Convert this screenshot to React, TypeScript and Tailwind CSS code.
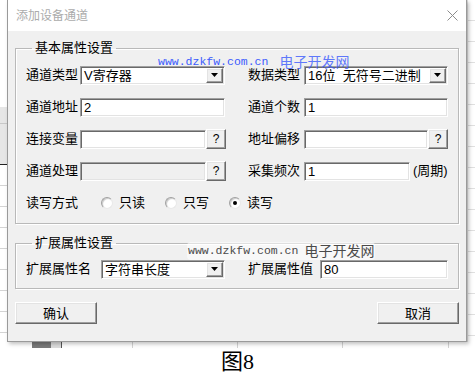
import React from "react";

const cjk = "font-['Liberation_Sans','Noto_Sans_CJK_SC',sans-serif]";
const sunken =
  "border border-t-[#a0a0a0] border-l-[#a0a0a0] border-b-white border-r-white shadow-[inset_1px_1px_0_#696969,inset_-1px_-1px_0_#e3e3e3]";
const raised =
  "bg-[#f0f0f0] border border-t-white border-l-white border-b-[#696969] border-r-[#696969] shadow-[inset_-1px_-1px_0_#a0a0a0,inset_1px_1px_0_#e3e3e3]";

const Input = ({ w, value, disabled }: { w: string; value?: string; disabled?: boolean }) => (
  <div className={`${sunken} ${w} h-[19px] ${disabled ? "bg-[#f0f0f0]" : "bg-white"} flex items-center pl-[3px] text-[13px] leading-none`}>
    {value}
  </div>
);

const Select = ({ w, value }: { w: string; value: string }) => (
  <div className={`${sunken} ${w} h-[19px] bg-white flex items-center justify-between pl-[3px] pr-[1px] text-[13px] leading-none`}>
    <span className="whitespace-pre">{value}</span>
    <div className={`${raised} w-[17px] h-[15px] flex items-center justify-center`}>
      <svg width="7" height="4" viewBox="0 0 7 4">
        <path d="M0 0h7L3.5 4z" fill="#000" />
      </svg>
    </div>
  </div>
);

const Ask = () => (
  <div className={`${raised} w-[20px] h-[20px] flex items-center justify-center text-[12px] leading-none`}>?</div>
);

const Radio = ({ label, checked }: { label: string; checked?: boolean }) => (
  <div className="flex items-center gap-[6px]">
    <div className="w-[12px] h-[12px] rounded-full bg-white border border-t-[#a0a0a0] border-l-[#a0a0a0] border-b-[#e8e8e8] border-r-[#e8e8e8] shadow-[inset_1px_1px_1px_#c8c8c8] flex items-center justify-center">
      {checked && <div className="w-[4px] h-[4px] rounded-full bg-black" />}
    </div>
    <span>{label}</span>
  </div>
);

const groupBox =
  "border border-[#b9b9b9] shadow-[inset_1px_1px_0_#ffffff,1px_1px_0_#ffffff] pl-[10px] pr-[9px]";

export default function App() {
  return (
    <div className={`w-[475px] h-[380px] bg-white flex flex-col overflow-hidden ${cjk}`}>
      <div className="h-[348px] flex flex-col">
        <div className="flex h-[342px]">
          {/* spreadsheet behind, left */}
          <div className="w-[7px] flex flex-col">
            <div className="h-[107px] bg-white" />
            <div className="h-[17px] bg-[#e6e6e6] border-b border-[#c8c8c8]" />
            <div className="h-[41px] bg-[#e6e6e6] border-b border-[#222]" />
            <div className="flex-1 bg-[repeating-linear-gradient(to_bottom,#ffffff_0,#ffffff_20px,#d4d4d4_20px,#d4d4d4_21px)]" />
          </div>

          <div className="relative z-10 w-[460px] h-[342px] flex flex-col border-l border-r border-b border-[#9a9a9a] shadow-[2px_2px_4px_rgba(0,0,0,0.25)]">
            <div className="h-[31px] bg-white flex items-center justify-between pl-[8px] pr-[8px]">
              <span className="text-[12px] text-[#ababab]">添加设备通道</span>
              <svg width="11" height="11" viewBox="0 0 11 11">
                <path d="M0.5 0.5L10.5 10.5M10.5 0.5L0.5 10.5" stroke="#8c8c8c" strokeWidth="1" />
              </svg>
            </div>

            <div className="flex-1 bg-[#f0f0f0] px-[7px] pt-[9px] flex flex-col text-[13px] text-black">
              <fieldset className={`${groupBox} pt-[9px] pb-[10px]`}>
                <legend className="ml-[6px] px-[3px] leading-[16px]">基本属性设置</legend>
                <div className="flex flex-col gap-[12px]">
                  <div className="flex items-center h-[20px]">
                    <span className="w-[54px]">通道类型</span>
                    <Select w="w-[145px]" value="V寄存器" />
                    <span className="ml-[23px] w-[56px]">数据类型</span>
                    <Select w="w-[144px]" value="16位  无符号二进制" />
                  </div>
                  <div className="flex items-center h-[20px]">
                    <span className="w-[54px]">通道地址</span>
                    <Input w="w-[145px]" value="2" />
                    <span className="ml-[23px] w-[56px]">通道个数</span>
                    <Input w="w-[144px]" value="1" />
                  </div>
                  <div className="flex items-center h-[20px]">
                    <span className="w-[54px]">连接变量</span>
                    <Input w="w-[126px]" />
                    <Ask />
                    <span className="ml-[22px] w-[56px]">地址偏移</span>
                    <Input w="w-[124px]" />
                    <Ask />
                  </div>
                  <div className="flex items-center h-[20px]">
                    <span className="w-[54px]">通道处理</span>
                    <Input w="w-[126px]" disabled />
                    <Ask />
                    <span className="ml-[22px] w-[56px]">采集频次</span>
                    <Input w="w-[106px]" value="1" />
                    <span className="ml-[3px]">(周期)</span>
                  </div>
                  <div className="flex items-center h-[20px]">
                    <span className="w-[75px]">读写方式</span>
                    <div className="flex items-center gap-[20px]">
                      <Radio label="只读" />
                      <Radio label="只写" />
                      <Radio label="读写" checked />
                    </div>
                  </div>
                </div>
              </fieldset>

              <fieldset className={`${groupBox} mt-[11px] pt-[8px] pb-[9px]`}>
                <legend className="ml-[6px] px-[3px] leading-[16px]">扩展属性设置</legend>
                <div className="flex items-center h-[20px]">
                  <span className="w-[75px]">扩展属性名</span>
                  <Select w="w-[124px]" value="字符串长度" />
                  <span className="ml-[23px] w-[72px]">扩展属性值</span>
                  <Input w="w-[128px]" value="80" />
                </div>
              </fieldset>

              <div className="mt-[13px] flex justify-between">
                <button className={`${raised} w-[82px] h-[22px] text-[13px] leading-none`}>确认</button>
                <button className={`${raised} w-[82px] h-[22px] text-[13px] leading-none`}>取消</button>
              </div>
            </div>

            {/* watermarks */}
            <div className="absolute left-[150px] top-[53px] h-[18px] flex items-center gap-[11px] text-[#3b5bfd] pointer-events-none">
              <span className="font-['Liberation_Mono',monospace] text-[11.5px]">www.dzkfw.com.cn</span>
              <span className="text-[14px] opacity-80">电子开发网</span>
            </div>
            <div className="absolute left-[179px] top-[242px] h-[18px] flex items-center gap-[6px] text-[#4a4a4a] pointer-events-none bg-[rgba(255,255,255,0.55)] rounded-[4px] px-[1px]">
              <span className="font-['Liberation_Mono',monospace] text-[11.5px]">www.dzkfw.com.cn</span>
              <span className="text-[14px]">电子开发网</span>
            </div>
          </div>

          {/* spreadsheet behind, right */}
          <div className="flex-1 bg-[repeating-linear-gradient(to_bottom,#ffffff_0,#ffffff_20px,#e0e0e0_20px,#e0e0e0_21px)] border-l border-[#e0e0e0]" />
        </div>

        <div className="flex-1 flex bg-white">
          <div className="w-[32px]" />
          <div className="w-[19px] bg-[#7a7a7a]" />
          <div className="w-[11px] bg-[#dcdcdc] border-r border-[#555]" />
          <div className="w-[71px] border-r border-[#d4d4d4]" />
          <div className="w-[105px] border-r border-[#d4d4d4]" />
          <div className="w-[105px] border-r border-[#d4d4d4]" />
          <div className="w-[106px] border-r border-[#d4d4d4]" />
        </div>
      </div>

      <div className="flex-1 flex justify-center">
        <span className="font-['Liberation_Serif','Noto_Sans_CJK_SC',serif] text-[22px] leading-[28px] text-black">图8</span>
      </div>
    </div>
  );
}
